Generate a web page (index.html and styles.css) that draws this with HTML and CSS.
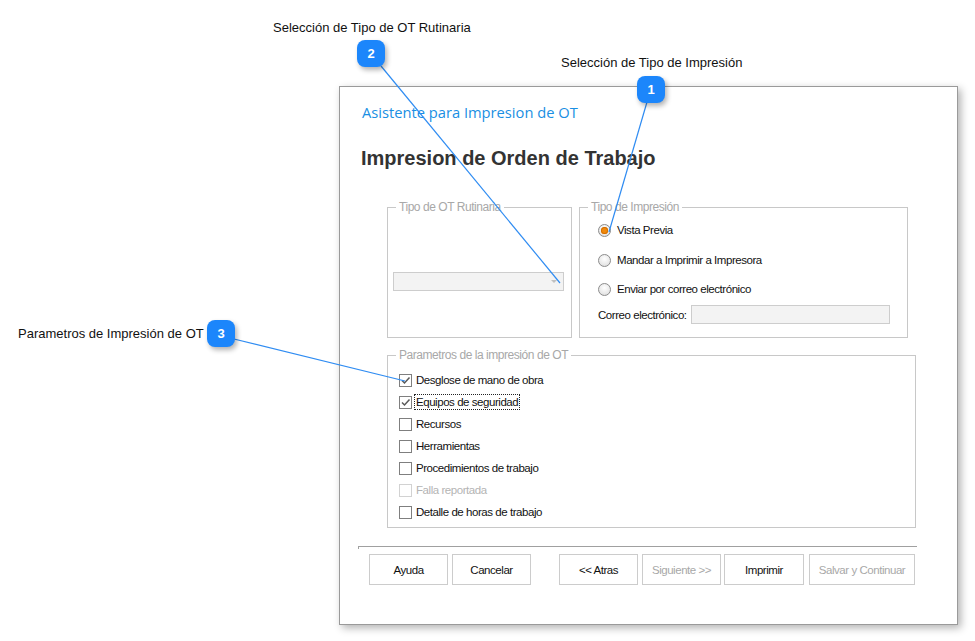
FILE: index.html
```html
<!DOCTYPE html>
<html>

<head>
    <meta charset="utf-8">
    <title>Asistente para Impresion de OT</title>
    <link rel="stylesheet" href="styles.css">
</head>

<body>
    <div class="dialog">
        <div class="wizard-step">Asistente para Impresion de OT</div>
        <h1 class="wizard-title">Impresion de Orden de Trabajo</h1>

        <div class="groups">
            <fieldset class="group group-rutina">
                <legend>Tipo de OT Rutinaria</legend>
                <div class="combo"><span class="combo-arrow"></span></div>
            </fieldset>
            <fieldset class="group group-tipo">
                <legend>Tipo de Impresión</legend>
                <div class="group-body">
                    <div class="radio-row first"><span class="radio checked"></span>Vista Previa</div>
                    <div class="radio-row second"><span class="radio"></span>Mandar a Imprimir a Impresora</div>
                    <div class="radio-row third"><span class="radio"></span>Enviar por correo electrónico</div>
                    <div class="mail-row">
                        <span class="mail-label">Correo electrónico:</span>
                        <span class="textbox"></span>
                    </div>
                </div>
            </fieldset>
        </div>

        <fieldset class="group group-params">
            <legend>Parametros de la impresión de OT</legend>
            <div class="group-body">
                <div class="check-row"><span class="check checked"><svg viewBox="0 0 11 11"><path d="M2 5.5 L4.5 8 L9.5 2.5" /></svg></span>Desglose de mano de obra</div>
                <div class="check-row"><span class="check checked"><svg viewBox="0 0 11 11"><path d="M2 5.5 L4.5 8 L9.5 2.5" /></svg></span><span class="focus">Equipos de seguridad</span></div>
                <div class="check-row"><span class="check"></span>Recursos</div>
                <div class="check-row"><span class="check"></span>Herramientas</div>
                <div class="check-row"><span class="check"></span>Procedimientos de trabajo</div>
                <div class="check-row disabled"><span class="check"></span>Falla reportada</div>
                <div class="check-row"><span class="check"></span>Detalle de horas de trabajo</div>
            </div>
        </fieldset>

        <div class="separator"></div>

        <div class="buttons">
            <button class="btn btn-ayuda">Ayuda</button>
            <button class="btn btn-cancelar">Cancelar</button>
            <button class="btn btn-atras">&lt;&lt; Atras</button>
            <button class="btn btn-siguiente" disabled>Siguiente &gt;&gt;</button>
            <button class="btn btn-imprimir">Imprimir</button>
            <button class="btn btn-salvar" disabled>Salvar y Continuar</button>
        </div>
    </div>

    <!-- callouts over the screenshot -->
    <svg class="leaders" width="975" height="641">
        <line x1="381" y1="66" x2="560" y2="283" />
        <line x1="647" y1="102" x2="609" y2="232" />
        <line x1="234" y1="339" x2="405" y2="381" />
    </svg>

    <div class="note note-2">Selección de Tipo de OT Rutinaria</div>
    <div class="badge badge-2">2</div>

    <div class="note note-1">Selección de Tipo de Impresión</div>
    <div class="badge badge-1">1</div>

    <div class="note note-3">Parametros de Impresión de OT</div>
    <div class="badge badge-3">3</div>
</body>

</html>
```

FILE: styles.css
```css
* {
    box-sizing: border-box;
    --badge-blue: #1c86fb;
    --group-line: #c8c8c8;
    --disabled: #a8a8a8;
}

body {
    margin: 0;
    padding: 86px 0 0 339px;
    width: 975px;
    height: 641px;
    position: relative;
    overflow: hidden;
    background: #fff;
    font-family: "Liberation Sans", Arial, sans-serif;
}

.dialog {
    width: 619px;
    height: 539px;
    border: 1px solid #9a9a9a;
    background: #fff;
    box-shadow: 3px 3px 8px rgba(0, 0, 0, 0.3);
    padding-top: 15px;
    font-size: 11.5px;
    letter-spacing: -0.45px;
    color: #111;
}

.wizard-step {
    padding-left: 22px;
    font-family: "Open Sans", sans-serif;
    font-size: 14.7px;
    letter-spacing: 0;
    line-height: 20px;
    color: #1a8fe3;
}

.wizard-title {
    margin: 24px 0 0;
    padding-left: 21px;
    font-size: 20px;
    letter-spacing: 0;
    line-height: 24px;
    font-weight: bold;
    color: #333;
}

.groups {
    display: flex;
    gap: 7px;
    margin: 30px 0 0 47px;
}

.group {
    margin: 0;
    padding: 0;
    border: 1px solid var(--group-line);
    min-width: 0;
}

.group legend {
    margin-left: 8px;
    padding: 0 3px;
    font-size: 12px;
    line-height: 14px;
    color: var(--disabled);
}

.group-rutina {
    width: 185px;
    height: 138px;
}

.combo {
    position: relative;
    margin: 58px 0 0 5px;
    width: 171px;
    height: 19px;
    border: 1px solid #cdcdcd;
    background: #f3f3f3;
}

.combo-arrow {
    position: absolute;
    right: 6px;
    top: 7px;
    border-left: 3px solid transparent;
    border-right: 3px solid transparent;
    border-top: 3px solid #c0c0c0;
}

.group-tipo {
    width: 329px;
    height: 138px;
}

.group-tipo .group-body {
    padding-left: 18px;
}

.radio-row {
    display: flex;
    align-items: center;
    height: 16px;
    gap: 6px;
    white-space: nowrap;
}

.radio-row.first { margin-top: 8px; }
.radio-row.second { margin-top: 14px; }
.radio-row.third { margin-top: 13px; }

.radio {
    flex: none;
    width: 13px;
    height: 13px;
    border-radius: 50%;
    border: 1px solid #8c8c8c;
    background: radial-gradient(circle at 50% 35%, #fff 0%, #e9e9e9 60%, #d6d6d6 100%);
    display: flex;
    align-items: center;
    justify-content: center;
}

.radio.checked::after {
    content: "";
    width: 7px;
    height: 7px;
    border-radius: 50%;
    background: #f08a0c;
    box-shadow: inset 0 0 0 1px #d46f00;
}

.mail-row {
    display: flex;
    align-items: center;
    margin-top: 8px;
    height: 19px;
    white-space: nowrap;
}

.mail-label {
    width: 93px;
}

.textbox {
    width: 199px;
    height: 19px;
    border: 1px solid #cdcdcd;
    background: #f3f3f3;
}

.group-params {
    width: 529px;
    margin: 10px 0 0 47px;
}

.group-params .group-body {
    padding: 7px 0 4px 11px;
}

.check-row {
    display: flex;
    align-items: center;
    gap: 4px;
    height: 22px;
    white-space: nowrap;
}

.check {
    flex: none;
    width: 13px;
    height: 13px;
    border: 1px solid #7f7f7f;
    background: #fff;
    display: flex;
}

.check svg {
    width: 11px;
    height: 11px;
    fill: none;
    stroke: #5a5a5a;
    stroke-width: 1.5;
}

.check-row.disabled {
    color: #b4b4b4;
}

.check-row.disabled .check {
    border-color: #d2d2d2;
}

.focus {
    outline: 1px dotted #222;
    outline-offset: 1px;
}

.separator {
    margin: 18px 0 0 18px;
    width: 559px;
    height: 3px;
    border-top: 1px solid #a0a0a0;
    border-left: 1px solid #a0a0a0;
}

.buttons {
    display: flex;
    margin: 5px 0 0 29px;
}

.btn {
    width: 79px;
    height: 31px;
    padding: 0;
    border: 1px solid #cccccc;
    background: #fff;
    font-family: inherit;
    font-size: 11.5px;
    letter-spacing: -0.45px;
    color: #111;
    white-space: nowrap;
}

.btn:disabled {
    color: var(--disabled);
}

.btn-cancelar { margin-left: 4px; }
.btn-atras { margin-left: 28px; }
.btn-siguiente { margin-left: 4px; }
.btn-imprimir { margin-left: 3px; width: 80px; }
.btn-salvar { margin-left: 5px; width: 106px; }

/* callouts */

.leaders {
    position: absolute;
    left: 0;
    top: 0;
    pointer-events: none;
}

.leaders line {
    stroke: #2f8cf2;
    stroke-width: 1.2;
}

.note {
    position: absolute;
    font-size: 13px;
    line-height: 16px;
    color: #111;
    white-space: nowrap;
}

.note-2 { left: 273px; top: 20px; }
.note-1 { left: 561px; top: 55px; }
.note-3 { left: 18px; top: 326px; }

.badge {
    position: absolute;
    width: 28px;
    height: 27px;
    border-radius: 8px;
    background: var(--badge-blue);
    box-shadow: 2px 3px 5px rgba(0, 0, 0, 0.3);
    color: #fff;
    font-size: 13px;
    font-weight: bold;
    line-height: 27px;
    text-align: center;
}

.badge-2 { left: 357px; top: 40px; }
.badge-1 { left: 637px; top: 76px; }
.badge-3 { left: 207px; top: 320px; }
```
